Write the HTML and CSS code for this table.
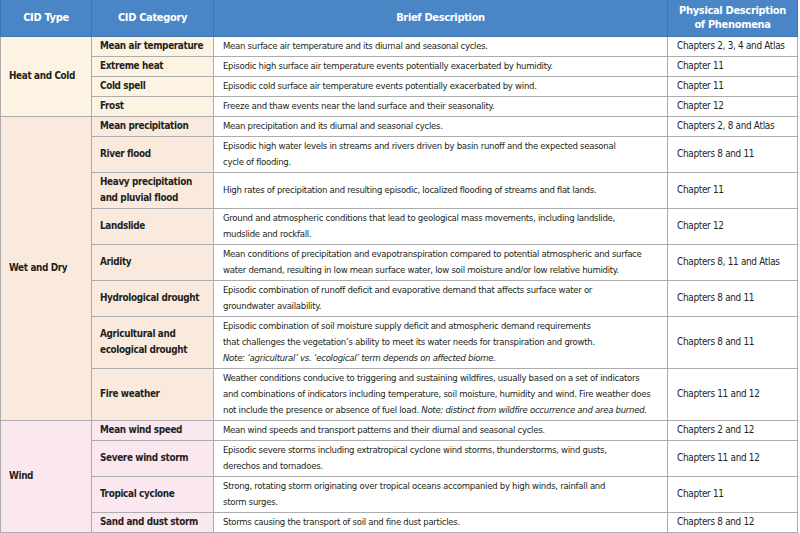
FILE: index.html
```html
<!DOCTYPE html>
<html>
<head>
<meta charset="utf-8">
<link rel="stylesheet" href="styles.css">
</head>
<body>
<table class="cid">
  <colgroup>
    <col class="c-type"><col class="c-cat"><col class="c-desc"><col class="c-ch">
  </colgroup>
  <thead>
    <tr>
      <th>CID Type</th>
      <th>CID Category</th>
      <th>Brief Description</th>
      <th>Physical Description<br>of Phenomena</th>
    </tr>
  </thead>
  <tbody class="g-heat">
    <tr><td class="type" rowspan="4">Heat and Cold</td><td class="cat">Mean air temperature</td><td class="desc">Mean surface air temperature and its diurnal and seasonal cycles.</td><td class="ch">Chapters 2, 3, 4 and Atlas</td></tr>
    <tr><td class="cat">Extreme heat</td><td class="desc">Episodic high surface air temperature events potentially exacerbated by humidity.</td><td class="ch">Chapter 11</td></tr>
    <tr><td class="cat">Cold spell</td><td class="desc">Episodic cold surface air temperature events potentially exacerbated by wind.</td><td class="ch">Chapter 11</td></tr>
    <tr><td class="cat">Frost</td><td class="desc">Freeze and thaw events near the land surface and their seasonality.</td><td class="ch">Chapter 12</td></tr>
  </tbody>
  <tbody class="g-wet">
    <tr><td class="type" rowspan="8">Wet and Dry</td><td class="cat">Mean precipitation</td><td class="desc">Mean precipitation and its diurnal and seasonal cycles.</td><td class="ch">Chapters 2, 8 and Atlas</td></tr>
    <tr><td class="cat">River flood</td><td class="desc">Episodic high water levels in streams and rivers driven by basin runoff and the expected seasonal<br>cycle of flooding.</td><td class="ch">Chapters 8 and 11</td></tr>
    <tr><td class="cat">Heavy precipitation<br>and pluvial flood</td><td class="desc">High rates of precipitation and resulting episodic, localized flooding of streams and flat lands.</td><td class="ch">Chapter 11</td></tr>
    <tr><td class="cat">Landslide</td><td class="desc">Ground and atmospheric conditions that lead to geological mass movements, including landslide,<br>mudslide and rockfall.</td><td class="ch">Chapter 12</td></tr>
    <tr><td class="cat">Aridity</td><td class="desc">Mean conditions of precipitation and evapotranspiration compared to potential atmospheric and surface<br>water demand, resulting in low mean surface water, low soil moisture and/or low relative humidity.</td><td class="ch">Chapters 8, 11 and Atlas</td></tr>
    <tr><td class="cat">Hydrological drought</td><td class="desc">Episodic combination of runoff deficit and evaporative demand that affects surface water or<br>groundwater availability.</td><td class="ch">Chapters 8 and 11</td></tr>
    <tr><td class="cat">Agricultural and<br>ecological drought</td><td class="desc">Episodic combination of soil moisture supply deficit and atmospheric demand requirements<br>that challenges the vegetation’s ability to meet its water needs for transpiration and growth.<br><em>Note: ‘agricultural’ vs. ‘ecological’ term depends on affected biome.</em></td><td class="ch">Chapters 8 and 11</td></tr>
    <tr><td class="cat">Fire weather</td><td class="desc">Weather conditions conducive to triggering and sustaining wildfires, usually based on a set of indicators<br>and combinations of indicators including temperature, soil moisture, humidity and wind. Fire weather does<br>not include the presence or absence of fuel load. <em>Note: distinct from wildfire occurrence and area burned.</em></td><td class="ch">Chapters 11 and 12</td></tr>
  </tbody>
  <tbody class="g-wind">
    <tr><td class="type" rowspan="4">Wind</td><td class="cat">Mean wind speed</td><td class="desc">Mean wind speeds and transport patterns and their diurnal and seasonal cycles.</td><td class="ch">Chapters 2 and 12</td></tr>
    <tr><td class="cat">Severe wind storm</td><td class="desc">Episodic severe storms including extratropical cyclone wind storms, thunderstorms, wind gusts,<br>derechos and tornadoes.</td><td class="ch">Chapters 11 and 12</td></tr>
    <tr><td class="cat">Tropical cyclone</td><td class="desc">Strong, rotating storm originating over tropical oceans accompanied by high winds, rainfall and<br>storm surges.</td><td class="ch">Chapter 11</td></tr>
    <tr><td class="cat">Sand and dust storm</td><td class="desc">Storms causing the transport of soil and fine dust particles.</td><td class="ch">Chapters 8 and 12</td></tr>
  </tbody>
</table>
</body>
</html>
```

FILE: styles.css
```css
html, body {
  margin: 0;
  padding: 0;
  background: #ffffff;
}
body {
  font-family: "DejaVu Sans Condensed", "Liberation Sans", sans-serif;
  color: #231f20;
  font-size: 9.5px;
  letter-spacing: -0.28px;
}
.cid {
  border-collapse: collapse;
  table-layout: fixed;
  width: 797px;
}
.c-type { width: 91px; }
.c-cat { width: 122px; }
.c-desc { width: 454px; }
.c-ch { width: 130px; }

.cid th {
  background: #4a86c6;
  color: #ffffff;
  font-weight: bold;
  font-size: 11px;
  letter-spacing: -0.33px;
  line-height: 14px;
  height: 36px;
  padding: 0 2px;
  box-sizing: border-box;
  text-align: center;
  vertical-align: middle;
  border: 1px solid #3f74ae;
  border-top: none;
  white-space: nowrap;
}
.cid td {
  border: 1px solid #acacac;
  line-height: 16px;
  padding: 1.5px 8px;
  vertical-align: middle;
  text-align: left;
  white-space: nowrap;
}
.cid td.type, .cid td.cat {
  font-weight: bold;
  font-size: 9.9px;
  letter-spacing: -0.35px;
}
.cid td.desc { padding-left: 9px; }
.cid td.ch { padding-left: 9px; font-size: 9.9px; letter-spacing: -0.3px; }
.cid tbody { border-top: 1px solid #8e8e8e; }

.g-heat .type, .g-heat .cat { background: #fdf3e2; }
.g-wet .type, .g-wet .cat { background: #faeadd; }
.g-wind .type, .g-wind .cat { background: #fbe7ef; }
em { font-style: italic; }
```
